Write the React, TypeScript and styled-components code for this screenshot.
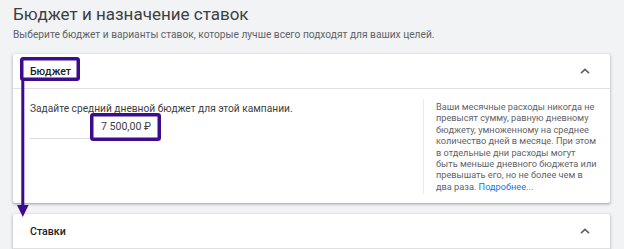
import React from 'react';
import styled, { createGlobalStyle } from 'styled-components';

const GlobalStyle = createGlobalStyle`
	html, body {
		margin: 0;
		padding: 0;
		background: #f1f3f4;
		font-family: Roboto, "Noto Sans", Arial, sans-serif;
		color: #3c4043;
		overflow: hidden;
	}
`;

const Page = styled.div`
	position: relative;
	width: 624px;
	height: 249px;
	padding: 0 14px 0 13px;
	box-sizing: border-box;
	overflow: hidden;
`;

const Title = styled.h1`
	margin: 0;
	padding-top: 3px;
	font-size: 17px;
	line-height: 23px;
	font-weight: 400;
	color: #3c4043;
`;

const Subtitle = styled.div`
	margin-top: 2px;
	font-size: 10.2px;
	line-height: 14px;
	color: #5f6368;
`;

const Card = styled.section<{ $top: number }>`
	margin-top: ${p => p.$top}px;
	background: #fff;
	border-radius: 2px;
	box-shadow: 0 1px 2px rgba(60, 64, 67, .3), 0 1px 3px 1px rgba(60, 64, 67, .15);
`;

const CardHeader = styled.div`
	display: flex;
	align-items: center;
	justify-content: space-between;
	height: 34px;
	padding: 0 20px 0 17px;
	border-bottom: 1px solid #e0e0e0;
`;

const CardTitle = styled.div`
	font-size: 10.6px;
	font-weight: 500;
	color: #202124;
`;

const Body = styled.div`
	display: flex;
	padding: 10px 12px 9px 17px;
`;

const Main = styled.div`
	flex: 1;
	padding-top: 3px;
`;

const Prompt = styled.div`
	font-size: 10.2px;
	line-height: 13px;
	color: #3c4043;
`;

const Amount = styled.div`
	width: 130px;
	height: 22px;
	margin-top: 2px;
	padding-right: 9px;
	box-sizing: border-box;
	border-bottom: 1px solid #dadce0;
	text-align: right;
	font-size: 10.6px;
	line-height: 19px;
	color: #3c4043;
`;

const Aside = styled.aside`
	width: 162px;
	padding: 2px 0 2px 12px;
	border-left: 1px solid #e8eaed;
	font-size: 9.2px;
	line-height: 11.4px;
	color: #5f6368;
`;

const More = styled.a`
	color: #1a73e8;
	text-decoration: none;
`;

const Overlay = styled.svg`
	position: absolute;
	left: 0;
	top: 0;
	pointer-events: none;
`;

function Chevron() {
	return <svg width="10" height="6" viewBox="0 0 10 6">
	         <path d="M1 5.2 L5 1.4 L9 5.2" fill="none" stroke="#5f6368" strokeWidth="1.6" />
	       </svg>;
}

export default function App() {
	const violet = '#3d0c8c';
	return <Page>
	         <GlobalStyle />
	         <Title>Бюджет и назначение ставок</Title>
	         <Subtitle>Выберите бюджет и варианты ставок, которые лучше всего подходят для ваших целей.</Subtitle>

	         <Card $top={12}>
	           <CardHeader>
	             <CardTitle>Бюджет</CardTitle>
	             <Chevron />
	           </CardHeader>
	           <Body>
	             <Main>
	               <Prompt>Задайте средний дневной бюджет для этой кампании.</Prompt>
	               <Amount>7 500,00 ₽</Amount>
	             </Main>
	             <Aside>
	               Ваши месячные расходы никогда не превысят сумму, равную дневному бюджету, умноженному на среднее
	               количество дней в месяце. При этом в отдельные дни расходы могут быть меньше дневного бюджета или
	               превышать его, но не более чем в два раза. <More href="#">Подробнее...</More>
	             </Aside>
	           </Body>
	         </Card>

	         <Card $top={11}>
	           <CardHeader>
	             <CardTitle>Ставки</CardTitle>
	             <Chevron />
	           </CardHeader>
	         </Card>

	         {/* annotation marks drawn over the page */}
	         <Overlay width="624" height="249">
	           <rect x="21.75" y="58.75" width="56.5" height="20.5" rx="1.5" fill="none" stroke={violet} strokeWidth="3.5" />
	           <rect x="91.75" y="114.75" width="67.5" height="24.5" rx="1.5" fill="none" stroke={violet} strokeWidth="3.5" />
	           <line x1="22.8" y1="80" x2="22.8" y2="207" stroke={violet} strokeWidth="3" />
	           <polygon points="17,205 28.6,205 22.8,217" fill={violet} />
	         </Overlay>
	       </Page>;
}
